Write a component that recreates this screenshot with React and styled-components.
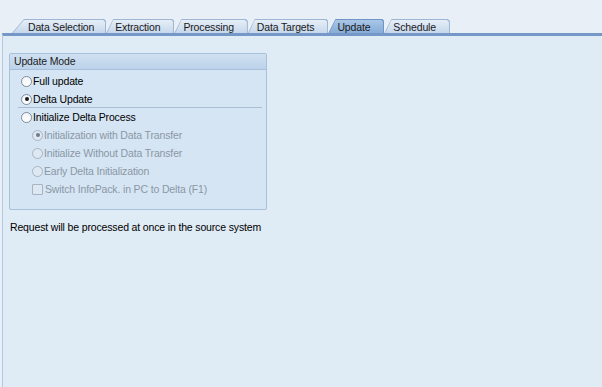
import React from 'react';
import styled, { createGlobalStyle } from 'styled-components';

const GlobalStyle = createGlobalStyle`
	html, body {
		margin: 0;
		padding: 0;
		background: #e9eff6;
		font-family: "Liberation Sans", Arial, sans-serif;
		font-size: 10.5px;
		letter-spacing: -0.15px;
		color: #000;
	}
`

const tabs = ['Data Selection', 'Extraction', 'Processing', 'Data Targets', 'Update', 'Schedule'];

const Radio = ({ checked, disabled }) => (
	<RadioIcon $disabled={disabled}>
		{checked && <Dot $disabled={disabled} />}
	</RadioIcon>
)

const Option = ({ label, checked, disabled, indent, box }) => (
	<Row $indent={indent} $disabled={disabled}>
		{box ? <CheckIcon /> : <Radio checked={checked} disabled={disabled} />}
		<span>{label}</span>
	</Row>
)

export default function App() {
	return (
		<Page>
			<GlobalStyle />
			<TabStrip>
				{tabs.map((t, i) => (
					<Tab key={t} $active={t === 'Update'} $slant={i === 0 ? 12 : 7}>
						<TabFace $active={t === 'Update'} $slant={i === 0 ? 12 : 7} $first={i === 0}>{t}</TabFace>
					</Tab>
				))}
			</TabStrip>
			<Panel>
				<Group>
					<GroupTitle>Update Mode</GroupTitle>
					<GroupBody>
						<Option label="Full update" />
						<Option label="Delta Update" checked />
						<Separator />
						<Option label="Initialize Delta Process" />
						<Option label="Initialization with Data Transfer" checked disabled indent />
						<Option label="Initialize Without Data Transfer" disabled indent />
						<Option label="Early Delta Initialization" disabled indent />
						<Option label="Switch InfoPack. in PC to Delta (F1)" disabled indent box />
					</GroupBody>
				</Group>
				<Message>Request will be processed at once in the source system</Message>
			</Panel>
		</Page>
	)
}

const Page = styled.div`
	height: 387px;
	display: flex;
	flex-direction: column;
	overflow: hidden;
`

const TabStrip = styled.div`
	display: flex;
	align-items: flex-end;
	height: 33px;
	padding-left: 12px;
`

const Tab = styled.div`
	height: 13px;
	margin-right: 0;
	padding: 1px 1px 0 1px;
	background: ${p => p.$active ? '#6f95c6' : '#9cb6d4'};
	clip-path: polygon(${p => p.$slant}px 0, calc(100% - 2px) 0, 100% 2px, 100% 100%, 0 100%);
`

const TabFace = styled.div`
	height: 100%;
	box-sizing: border-box;
	padding: ${p => p.$first ? '0 11px 0 15px' : '0 13px 0 8px'};
	display: flex;
	align-items: center;
	white-space: nowrap;
	color: #1a1a1a;
	background: ${p => p.$active
		? 'linear-gradient(#a9c6e6, #86acd8)'
		: 'linear-gradient(#e6eef7, #c6d8ec)'};
	clip-path: polygon(${p => p.$slant - 1}px 0, calc(100% - 2px) 0, 100% 2px, 100% 100%, 0 100%);
`

const Panel = styled.div`
	flex: 1;
	margin-left: 2px;
	background: #dfebf5;
	border-top: 3px solid #7598c9;
	border-left: 1px solid #b4c9e1;
	padding: 17px 0 0 6px;
`

const Group = styled.div`
	width: 256px;
	border: 1px solid #a7c0dc;
	border-radius: 2px;
	background: #d5e5f3;
`

const GroupTitle = styled.div`
	height: 15px;
	line-height: 15px;
	padding-left: 4px;
	color: #1c1c1c;
	background: linear-gradient(#cfe0f1, #bdd3ea);
	border-bottom: 1px solid #a7c0dc;
`

const GroupBody = styled.div`
	padding: 2px 0 11px 11px;
`

const Row = styled.div`
	height: 18px;
	display: flex;
	align-items: center;
	gap: 1px;
	padding-left: ${p => p.$indent ? '11px' : '0'};
	color: ${p => p.$disabled ? '#8b97a5' : '#000'};
`

const RadioIcon = styled.span`
	width: 9px;
	height: 9px;
	border-radius: 50%;
	border: 1px solid ${p => p.$disabled ? '#a8b4c2' : '#7f8c9c'};
	background: ${p => p.$disabled ? '#dde8f3' : 'linear-gradient(#f2f5f8, #ffffff)'};
	display: flex;
	align-items: center;
	justify-content: center;
	flex-shrink: 0;
`

const Dot = styled.span`
	width: 4px;
	height: 4px;
	border-radius: 50%;
	background: ${p => p.$disabled ? '#6f7b88' : '#1a1a1a'};
`

const CheckIcon = styled.span`
	width: 9px;
	height: 9px;
	margin-right: 1px;
	border: 1px solid #a8b4c2;
	border-radius: 1px;
	background: #dde8f3;
	flex-shrink: 0;
`

const Separator = styled.div`
	height: 1px;
	margin: -1px 4px 0 -3px;
	background: #a9bdd3;
`

const Message = styled.div`
	margin-top: 10px;
	padding-left: 1px;
	height: 14px;
	line-height: 14px;
`
